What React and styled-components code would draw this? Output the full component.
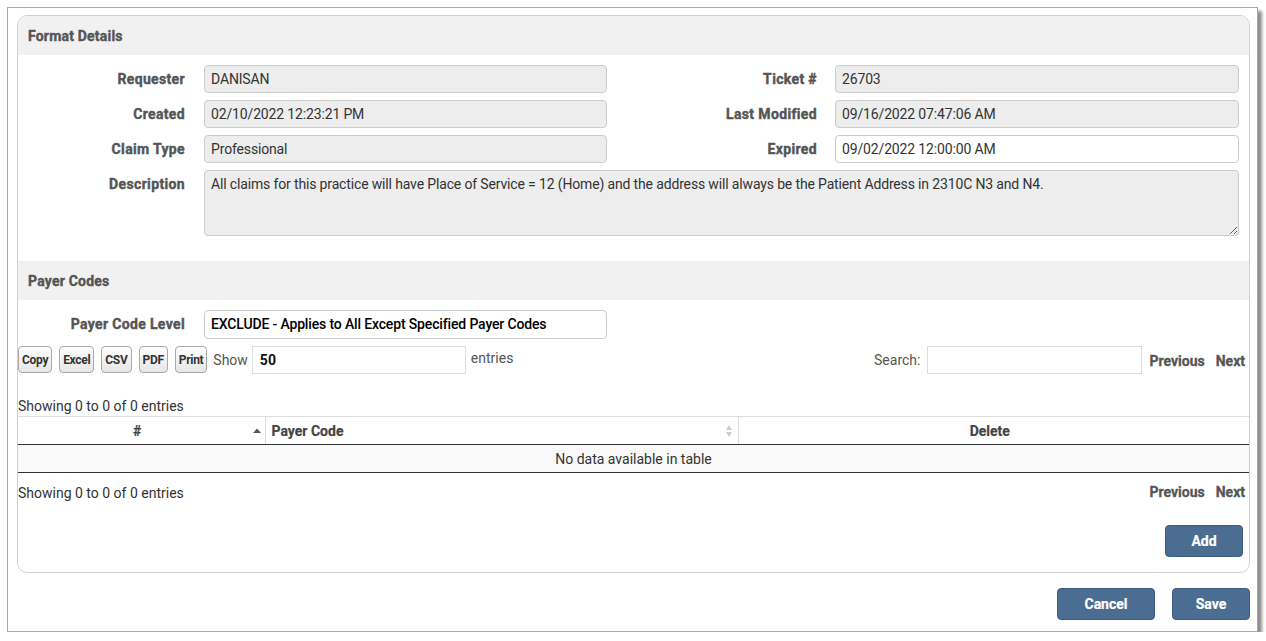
import React from "react";
import styled, { createGlobalStyle } from "styled-components";

const GlobalStyle = createGlobalStyle`
  html, body { margin: 0; padding: 0; background: #fff; }
  body { font-family: Roboto, "Liberation Sans", Arial, sans-serif; }
  * { box-sizing: border-box; }
`;

const Window = styled.div`
  margin: 7px 0 0 7px;
  width: 1251px;
  height: 625px;
  border: 1px solid #a8a8a8;
  box-shadow: 4px 4px 3px rgba(0, 0, 0, 0.45);
  padding: 7px 7px 0 9px;
  display: flex;
  flex-direction: column;
  background: #fff;
`;

const Panel = styled.div`
  border: 1px solid #d0d0d0;
  border-radius: 10px;
  overflow: hidden;
  display: flex;
  flex-direction: column;
  padding-bottom: 15px;
`;

const SectionHeader = styled.div`
  height: 39px;
  padding-left: 10px;
  background: #f1f1f1;
  display: flex;
  align-items: center;
  font-size: 14px;
  font-weight: 700;
  letter-spacing: 0.2px;
  -webkit-text-stroke: 0.4px #555;
  color: #555;
  margin-top: ${(p) => p.$top || 0}px;
`;

const FormGrid = styled.div`
  display: grid;
  grid-template-columns: 186px 403px 228px 404px;
  row-gap: 7px;
  padding: 10px 10px 0 0;
`;

const Label = styled.div`
  text-align: right;
  padding-right: ${(p) => (p.$right ? 18 : 19)}px;
  font-size: 14px;
  font-weight: 700;
  letter-spacing: 0.35px;
  -webkit-text-stroke: 0.4px #555;
  color: #555;
  line-height: 28px;
  white-space: nowrap;
`;

const Field = styled.div`
  height: ${(p) => p.$h || 28}px;
  border: 1px solid #ccc;
  border-radius: 4px;
  background: ${(p) => (p.$editable ? "#fff" : "#ededed")};
  padding: 0 6px;
  font-size: 14px;
  letter-spacing: -0.15px;
  line-height: ${(p) => (p.$h || 28) - 2}px;
  color: ${(p) => (p.$strong ? "#000" : "#333")};
  font-weight: ${(p) => (p.$strong ? 500 : 400)};
  white-space: nowrap;
`;

const DescArea = styled.textarea`
  grid-column: 2 / 5;
  height: 66px;
  border: 1px solid #ccc;
  border-radius: 4px;
  background: #ededed;
  padding: 4px 6px;
  font-family: Roboto, "Liberation Sans", Arial, sans-serif;
  font-size: 14px;
  letter-spacing: -0.15px;
  line-height: 18px;
  color: #333;
  resize: vertical;
  outline: none;
  margin: 0;
  display: block;
`;

const LevelRow = styled.div`
  display: grid;
  grid-template-columns: 186px 403px;
  margin-top: 10px;
`;

const Toolbar = styled.div`
  display: flex;
  align-items: center;
  margin-top: 6px;
  height: 29px;
`;

const ExportButtons = styled.div`
  display: flex;
  gap: 7px;
`;

const ExportButton = styled.button`
  height: 27px;
  padding: 0 3px;
  border: 1px solid #a9a9a9;
  border-radius: 4px;
  background: linear-gradient(#fdfdfd, #e6e6e6);
  font-family: Roboto, "Liberation Sans", Arial, sans-serif;
  font-size: 12px;
  font-weight: 700;
  letter-spacing: -0.3px;
  color: #333;
  cursor: pointer;
`;

const PlainText = styled.span`
  font-size: 14px;
  color: #555;
  margin-left: ${(p) => p.$ml || 0}px;
  margin-top: ${(p) => p.$mt || 0}px;
`;

const TextBox = styled.div`
  width: ${(p) => p.$w}px;
  height: 28px;
  border: 1px solid #ddd;
  margin-left: ${(p) => p.$ml || 0}px;
  padding: 0 7px;
  font-size: 14px;
  font-weight: 700;
  line-height: 26px;
  color: #111;
`;

const Spacer = styled.div`
  flex: 1;
`;

const PagerLink = styled.span`
  font-size: 14px;
  font-weight: 700;
  -webkit-text-stroke: 0.3px #555;
  color: #555;
  margin-left: ${(p) => p.$ml || 0}px;
  margin-right: ${(p) => p.$mr || 0}px;
  margin-top: ${(p) => p.$mt || 0}px;
`;

const Info = styled.div`
  font-size: 14px;
  color: #333;
  line-height: 16px;
  margin-top: ${(p) => p.$mt || 0}px;
`;

const InfoRow = styled.div`
  display: flex;
  align-items: center;
  margin-top: 12px;
  height: 16px;
`;

const Table = styled.table`
  width: 100%;
  border-collapse: collapse;
  margin-top: 2px;
  table-layout: fixed;
`;

const Th = styled.th`
  height: 28px;
  border-top: 1px solid #ddd;
  border-bottom: 1px solid #333;
  border-left: ${(p) => (p.$first ? "none" : "1px solid #ddd")};
  font-size: 14px;
  font-weight: 700;
  -webkit-text-stroke: 0.2px #444;
  color: #444;
  text-align: ${(p) => p.$align || "center"};
  padding: ${(p) => (p.$align === "left" ? "0 18px 0 6px" : "0 18px 0 10px")};
  position: relative;
`;

const SortIcon = styled.svg`
  position: absolute;
  right: 4px;
  top: 50%;
  transform: translateY(-50%);
`;

const Td = styled.td`
  height: 28px;
  background: #f9f9f9;
  border-bottom: 1px solid #333;
  text-align: center;
  font-size: 14px;
  color: #333;
`;

const ButtonRow = styled.div`
  display: flex;
  justify-content: flex-end;
  gap: 17px;
  margin-top: ${(p) => p.$mt || 0}px;
  padding-right: ${(p) => p.$pr || 0}px;
`;

const ActionButton = styled.button`
  width: ${(p) => p.$w}px;
  height: 32px;
  border: 1px solid #3f5f82;
  border-radius: 4px;
  background: #4b6d92;
  color: #fff;
  font-family: Roboto, "Liberation Sans", Arial, sans-serif;
  font-size: 14px;
  font-weight: 700;
  -webkit-text-stroke: 0.2px #fff;
  cursor: pointer;
`;

const details = [
  ["Requester", "DANISAN", "Ticket #", "26703", false],
  ["Created", "02/10/2022 12:23:21 PM", "Last Modified", "09/16/2022 07:47:06 AM", false],
  ["Claim Type", "Professional", "Expired", "09/02/2022 12:00:00 AM", true],
];

export default function App() {
  return (
    <>
      <GlobalStyle />
      <Window>
        <Panel>
          <SectionHeader>Format Details</SectionHeader>
          <FormGrid>
            {details.map(([l1, v1, l2, v2, editable]) => (
              <React.Fragment key={l1}>
                <Label>{l1}</Label>
                <Field>{v1}</Field>
                <Label $right>{l2}</Label>
                <Field $editable={editable}>{v2}</Field>
              </React.Fragment>
            ))}
            <Label>Description</Label>
            <DescArea
              readOnly
              defaultValue="All claims for this practice will have Place of Service = 12 (Home) and the address will always be the Patient Address in 2310C N3 and N4."
            />
          </FormGrid>

          <SectionHeader $top={25}>Payer Codes</SectionHeader>
          <LevelRow>
            <Label>Payer Code Level</Label>
            <Field $editable $strong $h={29}>
              EXCLUDE - Applies to All Except Specified Payer Codes
            </Field>
          </LevelRow>

          <Toolbar>
            <ExportButtons>
              {["Copy", "Excel", "CSV", "PDF", "Print"].map((b) => (
                <ExportButton key={b}>{b}</ExportButton>
              ))}
            </ExportButtons>
            <PlainText $ml={6}>Show</PlainText>
            <TextBox $w={214} $ml={4}>50</TextBox>
            <PlainText $ml={5} $mt={-4}>entries</PlainText>
            <Spacer />
            <PlainText>Search:</PlainText>
            <TextBox $w={215} $ml={7} />
            <PagerLink $ml={7} $mt={3}>Previous</PagerLink>
            <PagerLink $ml={11} $mr={4} $mt={3}>Next</PagerLink>
          </Toolbar>

          <Info $mt={24}>Showing 0 to 0 of 0 entries</Info>
          <Table>
            <colgroup>
              <col style={{ width: 247 }} />
              <col style={{ width: 473 }} />
              <col />
            </colgroup>
            <thead>
              <tr>
                <Th $first>
                  #
                  <SortIcon width="10" height="10" viewBox="0 0 10 10" style={{ right: 3 }}>
                    <path d="M1 7 L5 2.5 L9 7 Z" fill="#555" />
                  </SortIcon>
                </Th>
                <Th $align="left">
                  Payer Code
                  <SortIcon width="10" height="16" viewBox="0 0 10 16">
                    <path d="M2 7 L5 2 L8 7 Z" fill="#ccc" />
                    <path d="M2 9 L5 14 L8 9 Z" fill="#ccc" />
                  </SortIcon>
                </Th>
                <Th>Delete</Th>
              </tr>
            </thead>
            <tbody>
              <tr>
                <Td colSpan={3}>No data available in table</Td>
              </tr>
            </tbody>
          </Table>
          <InfoRow>
            <Info>Showing 0 to 0 of 0 entries</Info>
            <Spacer />
            <PagerLink $mt={-3}>Previous</PagerLink>
            <PagerLink $ml={11} $mr={4} $mt={-3}>Next</PagerLink>
          </InfoRow>
          <ButtonRow $mt={24} $pr={6}>
            <ActionButton $w={78}>Add</ActionButton>
          </ButtonRow>
        </Panel>
        <ButtonRow $mt={15}>
          <ActionButton $w={98}>Cancel</ActionButton>
          <ActionButton $w={78}>Save</ActionButton>
        </ButtonRow>
      </Window>
    </>
  );
}
